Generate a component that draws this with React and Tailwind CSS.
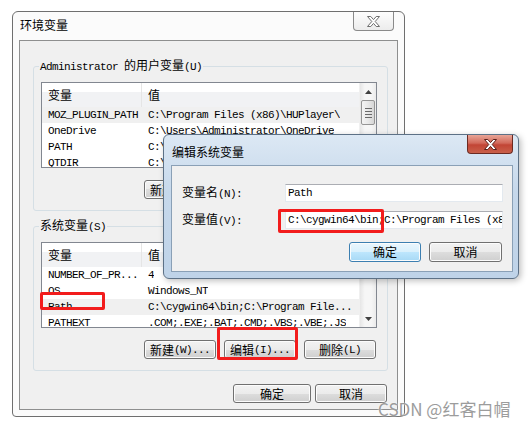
import React from "react";

const CJK = /([\u3400-\u9fff]+)/;

// latin runs stay in the mono font, CJK runs get their own span
function T({ s }) {
  return s.split(CJK).map((p, i) =>
    i % 2 === 1 ? (
      <span key={i} className="font-['Noto_Sans_CJK_SC',sans-serif] text-[12px] tracking-normal">
        {p}
      </span>
    ) : (
      p
    )
  );
}

function Btn({ label, className = "", primary = false }) {
  return (
    <div
      className={
        "h-[19px] rounded-[3px] border flex items-center justify-center shadow-[inset_0_0_0_1px_#fcfcfc] " +
        (primary
          ? "border-[#3c7fb1] bg-[linear-gradient(#eaf6fd_0%,#d9f0fc_50%,#bee6fd_50%,#a7d9f5_100%)] "
          : "border-[#707070] bg-[linear-gradient(#f2f2f2_0%,#ebebeb_50%,#dddddd_50%,#cfcfcf_100%)] ") +
        className
      }
    >
      <T s={label} />
    </div>
  );
}

function ScrollBar({ thumb }) {
  return (
    <div className="w-[17px] shrink-0 flex flex-col bg-[linear-gradient(90deg,#e6e6e6,#f6f6f6_30%,#f6f6f6_70%,#ebebeb)] border-l border-[#f0f0f0]">
      <div className="h-[17px] flex items-center justify-center">
        <svg width="7" height="4" viewBox="0 0 7 4">
          <path d="M0 4 L3.5 0 L7 4 Z" fill="#404040" />
        </svg>
      </div>
      {thumb ? (
        <div className="mx-[1px] h-[25px] rounded-[2px] border border-[#959595] bg-[linear-gradient(90deg,#f4f4f4,#e8e8e8_50%,#d6d6d6)] flex flex-col items-center justify-center gap-[2px]">
          <div className="w-[7px] h-[1px] bg-[#6a6a6a]" />
          <div className="w-[7px] h-[1px] bg-[#6a6a6a]" />
          <div className="w-[7px] h-[1px] bg-[#6a6a6a]" />
          <div className="w-[7px] h-[1px] bg-[#6a6a6a]" />
        </div>
      ) : null}
      <div className="flex-1" />
      <div className="h-[17px] flex items-center justify-center">
        <svg width="7" height="4" viewBox="0 0 7 4">
          <path d="M0 0 L3.5 4 L7 0 Z" fill="#404040" />
        </svg>
      </div>
    </div>
  );
}

function VarList({ rows, hl, thumb }) {
  return (
    <div className="h-[86px] border border-[#828790] bg-white flex overflow-hidden">
      <div className="flex-1 min-w-0 flex flex-col overflow-hidden">
        <div className="h-[24px] shrink-0 flex bg-[linear-gradient(#ffffff_0%,#ffffff_38%,#f1f2f4_38%,#f1f2f4_100%)]">
          <div className="w-[100px] shrink-0 pl-[6px] flex items-center border-r border-[#e5e5e5]">
            <T s="变量" />
          </div>
          <div className="pl-[6px] flex items-center">
            <T s="值" />
          </div>
        </div>
        {rows.map((r, i) => (
          <div
            key={r[0]}
            className={"h-[16px] shrink-0 flex items-center whitespace-nowrap " + (i === hl ? "bg-[#f0f0f0]" : "")}
          >
            <div className="w-[100px] shrink-0 pl-[6px] overflow-hidden">{r[0]}</div>
            <div className="pl-[6px] min-w-0 overflow-hidden">{r[1]}</div>
          </div>
        ))}
      </div>
      <ScrollBar thumb={thumb} />
    </div>
  );
}

function Group({ title, rows, hl, thumb, buttons, className = "" }) {
  return (
    <fieldset
      className={
        "min-w-0 ml-[13px] mr-[9px] border border-[#d5dfe5] rounded-[3px] pl-[7px] pr-[10px] pt-[8px] pb-[11px] " +
        className
      }
    >
      <legend className="ml-[-2px] px-[1px] leading-[14px]">
        <T s={title} />
      </legend>
      <VarList rows={rows} hl={hl} thumb={thumb} />
      <div className="mt-[12px] mr-[1px] flex justify-end gap-[8px]">
        {buttons.map((b) => (
          <Btn key={b} label={b} className="w-[72px]" />
        ))}
      </div>
    </fieldset>
  );
}

const userRows = [
  ["MOZ_PLUGIN_PATH", "C:\\Program Files (x86)\\HUPlayer\\"],
  ["OneDrive", "C:\\Users\\Administrator\\OneDrive"],
  ["PATH", "C:\\Users\\Administrator\\AppData\\Local\\Microsoft"],
  ["QTDIR", "C:\\Qt\\5.12.0\\msvc2017_64"],
];

const sysRows = [
  ["NUMBER_OF_PR...", "4"],
  ["OS", "Windows_NT"],
  ["Path", "C:\\cygwin64\\bin;C:\\Program File..."],
  ["PATHEXT", ".COM;.EXE;.BAT;.CMD;.VBS;.VBE;.JS"],
];

function XGlyph({ fill, stroke }) {
  return (
    <svg width="13" height="11" viewBox="0 0 13 11">
      <path
        d="M0.5 0.5 H3.8 L6.5 3.6 L9.2 0.5 H12.5 L8.2 5.5 L12.5 10.5 H9.2 L6.5 7.4 L3.8 10.5 H0.5 L4.8 5.5 Z"
        fill={fill}
        stroke={stroke}
        strokeWidth="1"
      />
    </svg>
  );
}

export default function App() {
  return (
    <div className="relative w-[529px] h-[427px] bg-white overflow-hidden font-['Liberation_Mono','Noto_Sans_CJK_SC',monospace] text-[11px] tracking-[-0.6px] leading-[14px] text-black">
      <div className="pt-[11px] pl-[12px]">
        {/* main window */}
        <div className="w-[393px] h-[406px] rounded-t-[6px] rounded-b-[4px] border border-[#6f6f6f] bg-[#fbfbfb] px-[6px] pb-[6px] flex flex-col">
          <div className="h-[28px] shrink-0 flex items-start justify-between">
            <div className="mt-[6px] pl-[1px]">
              <T s="环境变量" />
            </div>
            <div className="mr-[4px] w-[41px] h-[19px] rounded-b-[4px] border border-t-0 border-[#8a8a8a] bg-[linear-gradient(#fdfdfd,#ececec)] flex items-center justify-center">
              <XGlyph fill="#ffffff" stroke="#6e6e6e" />
            </div>
          </div>
          <div className="flex-1 min-w-0 border border-[#8e8f8f] bg-[#f0f0f0] flex flex-col">
            <Group
              className="mt-[17px]"
              title="Administrator 的用户变量(U)"
              rows={userRows}
              hl={0}
              thumb
              buttons={["新建(N)...", "编辑(E)...", "删除(D)"]}
            />
            <Group
              className="mt-[7px]"
              title="系统变量(S)"
              rows={sysRows}
              hl={2}
              buttons={["新建(W)...", "编辑(I)...", "删除(L)"]}
            />
            <div className="mt-[13px] mr-[10px] flex justify-end gap-[4px]">
              <Btn label="确定" className="w-[78px]" />
              <Btn label="取消" className="w-[72px]" />
            </div>
          </div>
        </div>
      </div>

      {/* edit dialog, on top of the main window */}
      <div className="absolute left-[163px] top-[134px] w-[356px] h-[145px] rounded-[6px] border border-[#5d7186] bg-[linear-gradient(#dce8f4,#c6d8eb_40%,#bfd3e8)] pl-[7px] pr-[5px] pb-[6px] flex flex-col shadow-[2px_2px_6px_rgba(0,0,0,0.25)]">
        <div className="h-[30px] shrink-0">
          <div className="mt-[10px] pl-[1px]">
            <T s="编辑系统变量" />
          </div>
        </div>
        <div className="absolute right-[5px] top-[0px] w-[46px] h-[19px] rounded-b-[4px] border border-t-0 border-[#6b2a22] bg-[linear-gradient(#e8a597,#d2695a_45%,#c24535_55%,#c9604a)] flex items-center justify-center">
          <XGlyph fill="#ffffff" stroke="#5a2019" />
        </div>
        <div className="flex-1 border border-[#8aa0b6] bg-[#f0f0f0] pl-[10px] pt-[18px]">
          <div className="flex items-center">
            <div className="w-[103px]">
              <T s="变量名(N):" />
            </div>
            <div className="w-[218px] h-[18px] border border-[#e3e9ef] border-t-[#abadb3] bg-white pl-[2px] flex items-center whitespace-nowrap overflow-hidden">
              Path
            </div>
          </div>
          <div className="mt-[9px] flex items-center">
            <div className="w-[103px]">
              <T s="变量值(V):" />
            </div>
            <div className="w-[218px] h-[18px] border border-[#e3e9ef] border-t-[#abadb3] bg-white pl-[2px] flex items-center whitespace-nowrap overflow-hidden">
              C:\cygwin64\bin;C:\Program Files (x86)
            </div>
          </div>
          <div className="mt-[13px] mr-[10px] flex justify-end gap-[8px]">
            <Btn label="确定" primary className="w-[72px] h-[20px]" />
            <Btn label="取消" className="w-[73px] h-[20px]" />
          </div>
        </div>
      </div>

      {/* red annotation boxes */}
      <div className="absolute left-[278px] top-[209px] w-[106px] h-[24px] rounded-[2px] border-[3px] border-[#f21c1c]" />
      <div className="absolute left-[40px] top-[292px] w-[65px] h-[18px] rounded-[2px] border-[3px] border-[#f21c1c]" />
      <div className="absolute left-[217px] top-[327px] w-[81px] h-[33px] rounded-[2px] border-[3px] border-[#f21c1c]" />

      {/* watermark */}
      <div className="absolute left-[378px] top-[398px] font-['Noto_Sans_CJK_SC',sans-serif] text-[17px] leading-[22px] tracking-normal text-[#9c9c9c] [text-shadow:0_0_2px_#fff]">
        CSDN @红客白帽
      </div>
    </div>
  );
}
